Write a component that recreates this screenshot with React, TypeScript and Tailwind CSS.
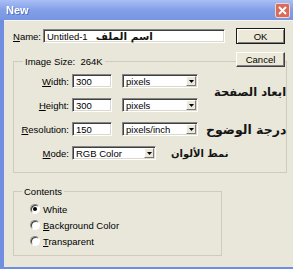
import type { ReactNode } from 'react'

const sunken =
  'bg-white border border-t-[#858585] border-l-[#858585] border-r-white border-b-white shadow-[inset_1px_1px_0_#3f3f3f,inset_-1px_-1px_0_#dcd9cc]'
const arabic = "font-['DejaVu_Sans',sans-serif] font-bold text-[#141414] whitespace-nowrap"

function Field({ w, children }: { w: string; children?: ReactNode }) {
  return <div className={`${sunken} ${w} h-[14px] flex items-center pl-[3px] overflow-visible`}>{children}</div>
}

function Select({ w, ml, value }: { w: string; ml: string; value: string }) {
  return (
    <div className={`${sunken} ${w} ${ml} h-[14px] flex items-center justify-between pl-[3px] pr-[1px]`}>
      <span>{value}</span>
      <span className="w-[10px] h-[10px] flex items-center justify-center bg-[#ece9d8] border border-t-white border-l-white border-r-[#7a7a7a] border-b-[#7a7a7a]">
        <svg width="5" height="3" viewBox="0 0 5 3">
          <path d="M0 0h5L2.5 3z" fill="#000" />
        </svg>
      </span>
    </div>
  )
}

function Row({ label, children }: { label: ReactNode; children: ReactNode }) {
  return (
    <div className="flex items-center h-[14px]">
      <span className="w-[55px] text-right">{label}</span>
      {children}
    </div>
  )
}

function Radio({ checked, label }: { checked?: boolean; label: ReactNode }) {
  return (
    <div className="flex items-center h-[12px] ml-[16px]">
      <span className="w-[10px] h-[10px] rounded-full bg-white border border-t-[#8a8a8a] border-l-[#8a8a8a] border-r-white border-b-white shadow-[inset_1px_1px_0_#404040] flex items-center justify-center">
        {checked && <span className="w-[4px] h-[4px] rounded-full bg-black" />}
      </span>
      <span className="ml-[3px]">{label}</span>
    </div>
  )
}

export default function App() {
  return (
    <div className="relative w-[293px] h-[269px] overflow-hidden bg-[#6f8ee0] flex flex-col font-['Liberation_Sans',Arial,sans-serif] text-[9.5px] leading-[11px] text-black">
      <div className="h-[20px] flex items-center justify-between pl-[6px] pr-[3px] bg-gradient-to-b from-[#a9bff4] via-[#839fe8] to-[#7695e2]">
        <span className="text-white font-bold text-[11px] drop-shadow-[1px_1px_0_#5a74c0]">New</span>
        <span className="w-[15px] h-[15px] rounded-[2px] bg-[#d86c5b] border border-[#f3d3cc] flex items-center justify-center">
          <svg width="9" height="9" viewBox="0 0 9 9">
            <path d="M1 1l7 7M8 1L1 8" stroke="#fff" strokeWidth="1.8" />
          </svg>
        </span>
      </div>

      <div className="flex-1 ml-[4px] mb-[2px] bg-[#e9e7da] border-t border-t-[#f6f5ee] flex pl-[9px] pt-[8px]">
        <div className="w-[213px] flex flex-col">
          <div className="flex items-center h-[14px]">
            <span className="w-[27px] text-right">
              <u>N</u>ame:
            </span>
            <div className="ml-[3px]">
              <Field w="w-[182px]">
                <span>Untitled-1</span>
                <span className={`${arabic} ml-[8px] text-[10.5px] leading-[14px]`}>اسم الملف</span>
              </Field>
            </div>
          </div>

          <fieldset className="mt-[13px] w-[209px] border border-[#cfccba] pt-[7px] pb-[12px]">
            <legend className="ml-[9px] px-[2px] leading-[11px]">Image Size:&nbsp;&nbsp;264K</legend>
            <div className="flex flex-col gap-[10px]">
              <Row label={<><u>W</u>idth:</>}>
                <div className="ml-[3px]"><Field w="w-[40px]">300</Field></div>
                <Select w="w-[76px]" ml="ml-[10px]" value="pixels" />
              </Row>
              <Row label={<><u>H</u>eight:</>}>
                <div className="ml-[3px]"><Field w="w-[40px]">300</Field></div>
                <Select w="w-[76px]" ml="ml-[10px]" value="pixels" />
              </Row>
              <Row label={<><u>R</u>esolution:</>}>
                <div className="ml-[3px]"><Field w="w-[40px]">150</Field></div>
                <Select w="w-[76px]" ml="ml-[10px]" value="pixels/inch" />
                <span className={`${arabic} ml-[8px] text-[12.5px]`}>درجة الوضوح</span>
              </Row>
              <Row label={<><u>M</u>ode:</>}>
                <Select w="w-[84px]" ml="ml-[3px]" value="RGB Color" />
                <span className={`${arabic} ml-[15px] text-[10px]`}>نمط الألوان</span>
              </Row>
            </div>
          </fieldset>

          <fieldset className="mt-[13px] w-[209px] border border-[#cfccba] pt-[6px] pb-[8px]">
            <legend className="ml-[8px] px-[2px] leading-[11px]">Contents</legend>
            <div className="flex flex-col gap-[4px]">
              <Radio checked label="White" />
              <Radio label={<><u>B</u>ackground Color</>} />
              <Radio label={<><u>T</u>ransparent</>} />
            </div>
          </fieldset>
        </div>

        <div className="ml-[10px] -mt-[1px] w-[49px] flex flex-col">
          <button className="h-[16px] bg-[#ece9d8] border border-[#1a1a1a] shadow-[inset_1px_1px_0_#fff,inset_-1px_-1px_0_#808080]">
            OK
          </button>
          <button className="mt-[8px] h-[15px] bg-[#ece9d8] border border-t-white border-l-white border-r-[#404040] border-b-[#404040] shadow-[inset_-1px_-1px_0_#808080]">
            Cancel
          </button>
        </div>
      </div>

      <span className={`${arabic} absolute left-[214px] top-[87px] text-[11.5px]`}>ابعاد الصفحة</span>
    </div>
  )
}
